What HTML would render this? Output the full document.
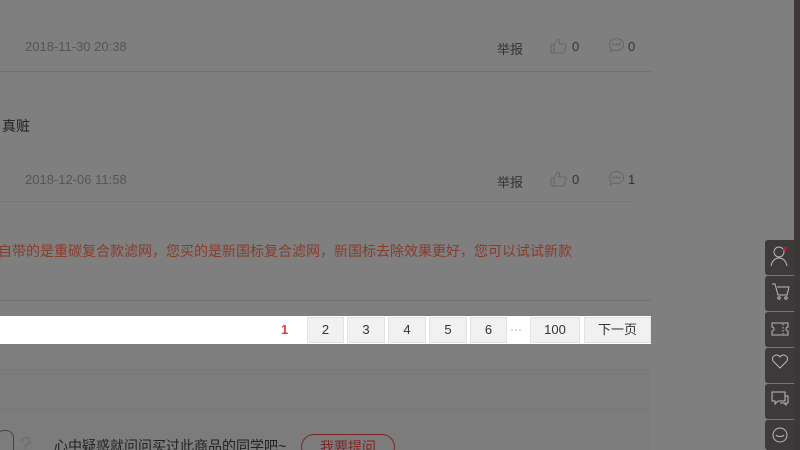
<!DOCTYPE html>
<html><head><meta charset="utf-8"><style>
*{margin:0;padding:0;box-sizing:border-box}
html,body{width:800px;height:450px;overflow:hidden}
body{background:#7f7f7f;position:relative;font-family:"Liberation Sans","Noto Sans CJK SC",sans-serif;font-size:12px;color:#555}
.a{position:absolute;white-space:nowrap}
.line{position:absolute;height:1px;background:#727272}
.pb{position:absolute;top:317px;height:26px;background:#f1f1f1;border:1px solid #e2e2e2;text-align:center;line-height:24px;color:#333;font-size:13px}
.sb{position:absolute;left:765px;width:30px;height:35px;background:#3e393a;border-radius:3px 0 0 3px}
.sep{position:absolute;left:767px;width:27px;height:1px;background:#7a7577}
.d{font-size:13px;color:#555}
.t{font-size:13px;color:#333}
</style></head><body>
<div class="a d" style="left:25px;top:39px">2018-11-30 20:38</div>
<div class="a" style="left:-4px;top:40px;color:#6a6a6a">◦</div>
<div class="a t" style="left:497px;top:39px">举报</div>
<svg class="a" style="left:550px;top:37px" width="18" height="18" viewBox="0 0 18 18" fill="none" stroke="#666" stroke-width="1"><path d="M1 8h3v8H1zM4 8l4-6c1 0 2 1 1.5 3L9 7h6c1 0 1.5 1 1 2l-2 6c0 .6-.6 1-1 1H4"/></svg>
<div class="a t" style="left:572px;top:39px">0</div>
<svg class="a" style="left:608px;top:37px" width="17" height="17" viewBox="0 0 17 17" fill="none" stroke="#666" stroke-width="1"><path d="M8.5 1.5c4 0 7 2.5 7 6s-3 6-7 6c-1 0-2 0-3-.5L2 15l1-3.2C2 10.6 1.5 9 1.5 7.5c0-3.5 3-6 7-6z"/><circle cx="5.5" cy="7.5" r=".6" fill="#666"/><circle cx="8.5" cy="7.5" r=".6" fill="#666"/><circle cx="11.5" cy="7.5" r=".6" fill="#666"/></svg>
<div class="a t" style="left:628px;top:39px">0</div>
<div class="line" style="left:0;top:71px;width:651px"></div>
<div class="a" style="left:2px;top:116px;font-size:14px;color:#222">真赃</div>
<div class="a" style="left:-4px;top:173px;color:#6a6a6a">◦</div>
<div class="a d" style="left:25px;top:172px">2018-12-06 11:58</div>
<div class="a t" style="left:497px;top:172px">举报</div>
<svg class="a" style="left:550px;top:170px" width="18" height="18" viewBox="0 0 18 18" fill="none" stroke="#666" stroke-width="1"><path d="M1 8h3v8H1zM4 8l4-6c1 0 2 1 1.5 3L9 7h6c1 0 1.5 1 1 2l-2 6c0 .6-.6 1-1 1H4"/></svg>
<div class="a t" style="left:572px;top:172px">0</div>
<svg class="a" style="left:608px;top:170px" width="17" height="17" viewBox="0 0 17 17" fill="none" stroke="#666" stroke-width="1"><path d="M8.5 1.5c4 0 7 2.5 7 6s-3 6-7 6c-1 0-2 0-3-.5L2 15l1-3.2C2 10.6 1.5 9 1.5 7.5c0-3.5 3-6 7-6z"/><circle cx="5.5" cy="7.5" r=".6" fill="#666"/><circle cx="8.5" cy="7.5" r=".6" fill="#666"/><circle cx="11.5" cy="7.5" r=".6" fill="#666"/></svg>
<div class="a t" style="left:628px;top:172px">1</div>
<div class="line" style="left:0;top:201px;width:636px;background:#777"></div>
<div class="a" style="left:-2px;top:241px;font-size:14px;color:#8a3a2a">自带的是重碳复合款滤网，您买的是新国标复合滤网，新国标去除效果更好，您可以试试新款</div>
<div class="line" style="left:0;top:300px;width:651px"></div>
<div class="a" style="left:0;top:316px;width:651px;height:28px;background:#fff"></div>
<div class="a" style="left:281px;top:322px;color:#e4393c;font-size:13px;font-weight:bold">1</div>
<div class="pb" style="left:307px;width:37px">2</div>
<div class="pb" style="left:347px;width:38px">3</div>
<div class="pb" style="left:388px;width:38px">4</div>
<div class="pb" style="left:429px;width:38px">5</div>
<div class="pb" style="left:470px;width:37px">6</div>
<div class="a" style="left:510px;top:322px;color:#999">···</div>
<div class="pb" style="left:530px;width:50px">100</div>
<div class="pb" style="left:584px;width:67px">下一页</div>
<div class="a" style="left:0;top:369px;width:651px;height:41px;background:#7c7c7c;border-top:1px solid #777;border-bottom:1px solid #777"></div>
<div class="a" style="left:0;top:410px;width:651px;height:40px;background:#7c7c7c"></div>
<div class="a" style="left:-4px;top:430px;width:18px;height:24px;border:1px solid #444;border-radius:8px 8px 0 0"></div>
<div class="a" style="left:19px;top:432px;font-size:22px;color:#727272;font-weight:bold">?</div>
<div class="a" style="left:54px;top:436px;font-size:14px;color:#222">心中疑惑就问问买过此商品的同学吧~</div>
<div class="a" style="left:301px;top:434px;width:94px;height:26px;border:1px solid #7e2525;border-radius:13px;color:#7e2525;font-size:14px;text-align:center;line-height:24px">我要提问</div>
<div class="a" style="left:794px;top:0;width:6px;height:450px;background:#3d3637"></div>
<div class="sb" style="top:240px"></div><div class="sep" style="top:275px"></div>
<div class="sb" style="top:276px"></div><div class="sep" style="top:311px"></div>
<div class="sb" style="top:312px"></div><div class="sep" style="top:347px"></div>
<div class="sb" style="top:348px"></div><div class="sep" style="top:383px"></div>
<div class="sb" style="top:384px"></div><div class="sep" style="top:419px"></div>
<div class="sb" style="top:420px;height:30px"></div>
<svg class="a" style="left:765px;top:240px" width="30" height="210" viewBox="0 0 30 210" fill="none" stroke="#bbb" stroke-width="1">
<circle cx="14" cy="12" r="5"/><path d="M6 26c1-5 4-8 8-8s7 3 8 8"/><circle cx="20" cy="9" r="2" fill="#b02030" stroke="none"/>
<path d="M7 44h3l3 11h9l2-8H12"/><circle cx="14" cy="58" r="1.3"/><circle cx="21" cy="58" r="1.3"/>
<path d="M7 83h16v4a2 2 0 0 0 0 4v4H7v-4a2 2 0 0 0 0-4z"/><path d="M18 84v10" stroke-dasharray="1.5 1.5"/>
<path d="M15 128l-7-7a3.8 3.8 0 0 1 7-4 3.8 3.8 0 0 1 7 4z"/>
<path d="M7 152h13v9h-7l-3 3v-3H7z"/><path d="M20 156h3v7h-2v2l-2-2h-4"/>
<circle cx="15" cy="195" r="7"/><path d="M11 195c1 2 7 2 8 0"/>
</svg>
</body></html>
